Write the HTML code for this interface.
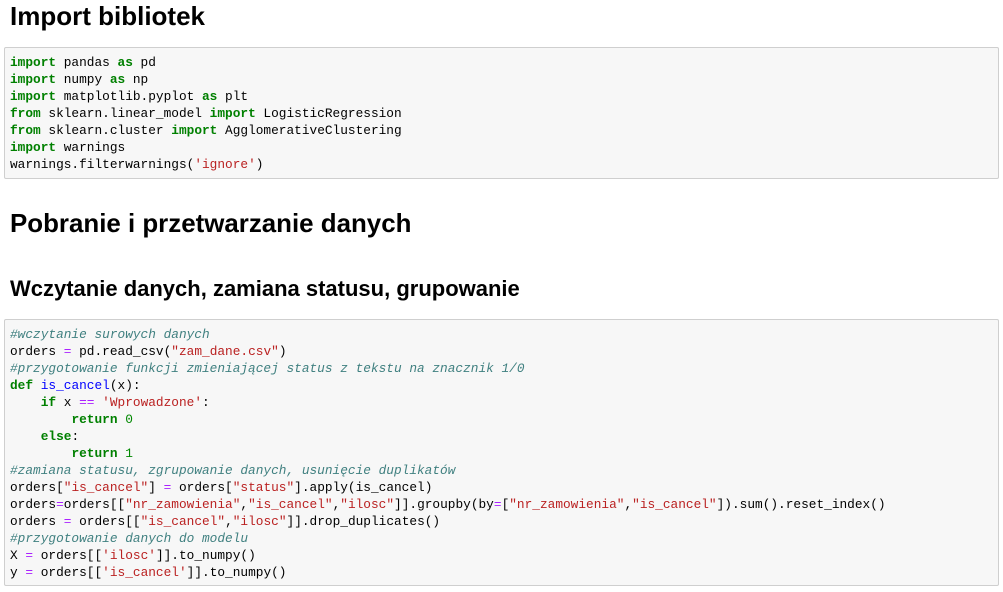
<!DOCTYPE html>
<html><head><meta charset="utf-8"><style>
body{margin:0;background:#fff;width:1003px;height:592px;overflow:hidden;font-family:"Liberation Sans",sans-serif;color:#000}
h1,h2,h3{position:absolute;left:10px;margin:0;font-weight:bold;white-space:nowrap}
h1{font-size:26px;top:1px}
h2.p{font-size:25.9px;top:210px}
h3{font-size:22px;top:276px}
pre{position:absolute;left:4px;width:988px;margin:0;background:#f7f7f7;border:1px solid #cfcfcf;border-radius:2px;padding:6px 0 0 5px;font-family:"Liberation Mono",monospace;font-size:12.8px;line-height:17px;color:#000}
.k{color:#008000;font-weight:bold}.c{color:#408080;font-style:italic}.s{color:#BA2121}.o{color:#AA22FF}.f{color:#0000FF}.n{color:#080}
</style></head><body>
<h1>Import bibliotek</h1>
<pre style="top:47px;height:124px"><span class="k">import</span> pandas <span class="k">as</span> pd
<span class="k">import</span> numpy <span class="k">as</span> np
<span class="k">import</span> matplotlib.pyplot <span class="k">as</span> plt
<span class="k">from</span> sklearn.linear_model <span class="k">import</span> LogisticRegression
<span class="k">from</span> sklearn.cluster <span class="k">import</span> AgglomerativeClustering
<span class="k">import</span> warnings
warnings.filterwarnings(<span class="s">'ignore'</span>)</pre>
<h2 class="p">Pobranie i przetwarzanie danych</h2>
<h3>Wczytanie danych, zamiana statusu, grupowanie</h3>
<pre style="top:319px;height:259px"><span class="c">#wczytanie surowych danych</span>
orders <span class="o">=</span> pd.read_csv(<span class="s">"zam_dane.csv"</span>)
<span class="c">#przygotowanie funkcji zmieniającej status z tekstu na znacznik 1/0</span>
<span class="k">def</span> <span class="f">is_cancel</span>(x):
    <span class="k">if</span> x <span class="o">==</span> <span class="s">'Wprowadzone'</span>:
        <span class="k">return</span> <span class="n">0</span>
    <span class="k">else</span>:
        <span class="k">return</span> <span class="n">1</span>
<span class="c">#zamiana statusu, zgrupowanie danych, usunięcie duplikatów</span>
orders[<span class="s">"is_cancel"</span>] <span class="o">=</span> orders[<span class="s">"status"</span>].apply(is_cancel)
orders<span class="o">=</span>orders[[<span class="s">"nr_zamowienia"</span>,<span class="s">"is_cancel"</span>,<span class="s">"ilosc"</span>]].groupby(by<span class="o">=</span>[<span class="s">"nr_zamowienia"</span>,<span class="s">"is_cancel"</span>]).sum().reset_index()
orders <span class="o">=</span> orders[[<span class="s">"is_cancel"</span>,<span class="s">"ilosc"</span>]].drop_duplicates()
<span class="c">#przygotowanie danych do modelu</span>
X <span class="o">=</span> orders[[<span class="s">'ilosc'</span>]].to_numpy()
y <span class="o">=</span> orders[[<span class="s">'is_cancel'</span>]].to_numpy()</pre>
</body></html>
